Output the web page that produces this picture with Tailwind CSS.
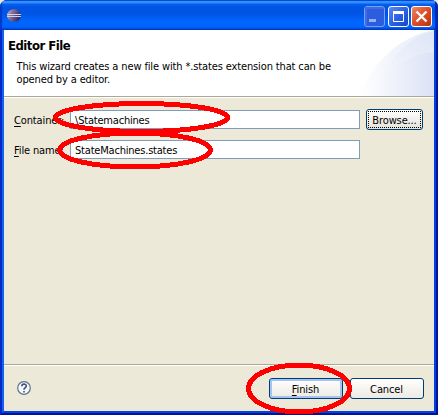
<!DOCTYPE html>
<html lang="en">
<head>
<meta charset="utf-8">
<title>Editor File</title>
<script src="https://cdn.jsdelivr.net/npm/@tailwindcss/browser@4"></script>
</head>
<body class="h-[415px] w-[438px] overflow-hidden bg-[#ece9d8]">
<div class="relative flex h-[415px] w-[438px] flex-col overflow-hidden rounded-t-[7px] bg-[#0831d9] font-['DejaVu_Sans_Condensed','DejaVu_Sans',sans-serif] text-[11px] leading-[13px] tracking-[-0.13px] text-black [&_u]:underline-offset-2">
  <!-- Title bar -->
  <header class="flex h-[30px] shrink-0 items-center bg-[linear-gradient(180deg,#0050d8_0px,#0050d8_1px,#3a93ff_1px,#2a8bff_3px,#0860ec_4px,#0054e3_7px,#0055e5_14px,#0063fb_20px,#0066ff_26px,#005bf0_28px,#0040d0_29px,#0038c8_30px)] pl-[7px] pr-[6px] shadow-[inset_2px_0_1px_#0038c8,inset_-3px_0_1px_#0028b8]">
    <svg class="mt-[2px]" width="15" height="14" viewBox="0 0 15 14">
      <defs><linearGradient id="orb" x1="0" y1="0" x2="1" y2="0.4"><stop offset="0" stop-color="#d0b9c4"/><stop offset=".4" stop-color="#8a7398"/><stop offset="1" stop-color="#2e2b6b"/></linearGradient></defs>
      <ellipse cx="7" cy="6.500" rx="7" ry="6.300" fill="url(#orb)"/>
      <path d="M0 5.500H14M0 7.500H14" stroke="#c8d2f4"/>
    </svg>
    <div class="ml-auto mt-[3px] flex gap-[2px]">
      <svg width="21" height="21" viewBox="0 0 21 21"><rect x=".5" y=".5" width="20" height="20" rx="2.5" fill="#2b5ddd" stroke="#7f9df0"/><path d="M2 19V2H19" fill="none" stroke="#3c6ce6" stroke-width="2"/><path d="M5 13h7v3H5z" fill="#98aef0"/></svg>
      <svg class="ml-px" width="21" height="21" viewBox="0 0 21 21"><defs><linearGradient id="mx" x1="0" y1="0" x2="1" y2="1"><stop offset="0" stop-color="#5d8cf8"/><stop offset=".5" stop-color="#2b62e6"/><stop offset="1" stop-color="#1646bd"/></linearGradient></defs><rect x=".5" y=".5" width="20" height="20" rx="2.5" fill="url(#mx)" stroke="#fff"/><path d="M5.500 6.500h10v9h-10z" fill="none" stroke="#fff"/><path d="M5 5h11v3H5z" fill="#fff"/></svg>
      <svg width="21" height="21" viewBox="0 0 21 21"><defs><linearGradient id="cl" x1="0" y1="0" x2="1" y2="1"><stop offset="0" stop-color="#f08b6c"/><stop offset=".45" stop-color="#e1512b"/><stop offset="1" stop-color="#b9300c"/></linearGradient></defs><rect x=".5" y=".5" width="20" height="20" rx="2.500" fill="url(#cl)" stroke="#fff"/><path d="M5.500 5.500L15.500 15.500M15.500 5.500L5.500 15.500" stroke="#fff" stroke-width="2.400"/></svg>
    </div>
  </header>

  <!-- Window frame: dark outer edge, brighter inner edge -->
  <div class="flex h-[385px] flex-col border-x-2 border-b-2 border-b-[#00139c] border-l-[#0a28c8] border-r-[#00139c] bg-[#ece9d8]">
  <div class="flex grow flex-col border-x-2 border-b-2 border-b-[#0344dc] border-l-[#0f62ee] border-r-[#0040dc]">
    <!-- Wizard banner -->
    <section class="relative h-[66px] shrink-0 bg-white">
      <svg class="absolute right-0 top-0" width="76" height="66" viewBox="0 0 76 66">
        <defs><linearGradient id="w1" x1="0" y1="0" x2="1" y2="0"><stop offset="0" stop-color="#fff"/><stop offset=".5" stop-color="#f0f3fb"/><stop offset="1" stop-color="#e8edf9"/></linearGradient><linearGradient id="w2" x1="0" y1="0" x2="1" y2="0"><stop offset="0" stop-color="#fff"/><stop offset="1" stop-color="#dbe2f5"/></linearGradient><linearGradient id="w3" x1="0" y1="1" x2="1" y2="0"><stop offset="0" stop-color="#f0f3fb"/><stop offset="1" stop-color="#dde5f6"/></linearGradient></defs>
        <path d="M0 66C14 35 40 6 76 0V66Z" fill="url(#w1)"/>
        <path d="M31 36C42 18 55 6 76 1V22C58 24 45 28 31 36Z" fill="url(#w3)"/>
        <path d="M4 66C20 42 48 24 76 22V66Z" fill="url(#w2)"/>
      </svg>
      <h1 class="relative pl-[4px] pt-[8px] text-[13px] font-bold leading-[15px] tracking-[-0.5px]">Editor File</h1>
      <p class="relative whitespace-nowrap pl-[12.500px] pt-[7px]">This wizard creates a new file with *.states extension that can be<br>opened by a editor.</p>
    </section>
    <div class="h-[2px] shrink-0 border-b border-white bg-[#aca899]"></div>

    <!-- Form -->
    <main class="flex grow flex-col gap-[9px] pl-[10px] pt-[11px]">
      <div class="flex h-[21px] items-center">
        <label class="w-[56px] whitespace-nowrap pt-px"><u>C</u>ontainer:</label>
        <div class="h-[19px] w-[290px] border border-[#7f9db9] bg-white pl-[4px] pt-[3px] tracking-[-0.2px]">\Statemachines</div>
        <button class="ml-[6px] h-[21px] w-[57px] rounded-[3px] border border-[#003c74] bg-linear-to-b from-white to-[#e5e2d8] p-px"><span class="flex h-full items-center justify-center border border-dotted border-black pt-px">Browse...</span></button>
      </div>
      <div class="flex h-[21px] items-center">
        <label class="w-[56px] whitespace-nowrap pt-px"><u>F</u>ile name:</label>
        <div class="h-[19px] w-[290px] border border-[#7f9db9] bg-white pl-[4px] pt-[3px] tracking-[-0.2px]">StateMachines.states</div>
      </div>
    </main>

    <!-- Button bar -->
    <footer class="flex h-[47px] shrink-0 items-start border-t border-[#aca899] pl-[13px] pr-[10px] pt-[13px] shadow-[inset_0_1px_0_#fff]">
      <svg class="mt-[3px]" width="14" height="14" viewBox="0 0 14 14"><circle cx="7" cy="7" r="6.300" fill="#f6f8fb" stroke="#5c7290" stroke-width="1.200"/><path d="M4.800 5.300C4.800 2.400 9.300 2.500 9.300 5C9.300 6.600 7 6.700 7 8.800M7 10v1.600" fill="none" stroke="#42597d" stroke-width="1.700"/></svg>
      <button class="ml-auto h-[21px] w-[74px] rounded-[3px] border border-[#003c74] bg-linear-to-b from-white to-[#eceae2] pr-px pt-px shadow-[inset_0_0_0_2px_#a5c3f3]"><u>F</u>inish</button>
      <button class="ml-[7px] h-[21px] w-[74px] rounded-[3px] border border-[#003c74] bg-linear-to-b from-white to-[#eceae2] pr-px pt-px">Cancel</button>
    </footer>
  </div>
  </div>

  <!-- Red highlight marks -->
  <svg class="pointer-events-none absolute left-0 top-0" width="438" height="415" viewBox="0 0 438 415" fill="none" stroke="#f00" stroke-width="5" shape-rendering="crispEdges">
    <ellipse cx="141.500" cy="117.500" rx="86" ry="14"/>
    <ellipse cx="135" cy="150" rx="75.500" ry="17"/>
    <ellipse cx="299" cy="388.500" rx="50.500" ry="23.500"/>
  </svg>
</div>
</body>
</html>
